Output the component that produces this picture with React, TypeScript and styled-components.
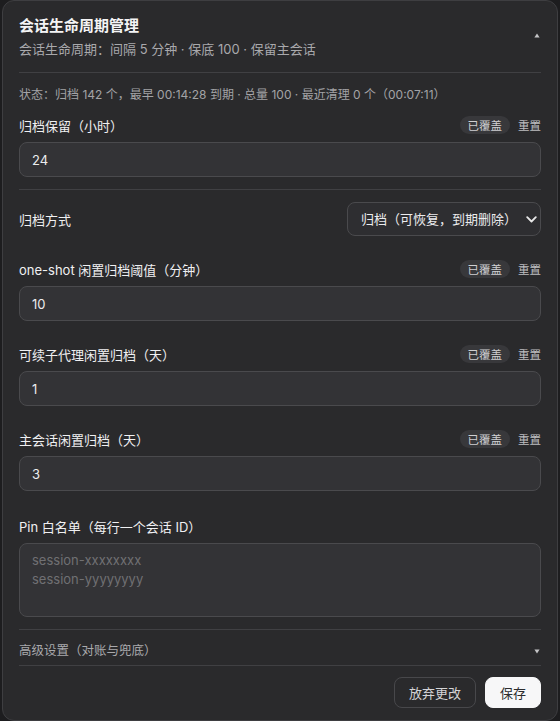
import styled, { createGlobalStyle } from 'styled-components';

const GlobalStyle = createGlobalStyle`
  * { box-sizing: border-box; }
  body {
    margin: 0;
    background: #1d1d1f;
    font-family: Inter, "Noto Sans CJK SC", sans-serif;
  }
`;

interface FieldDef {
  label: string;
  value: string;
}

const fields: FieldDef[] = [
  { label: 'one-shot 闲置归档阈值（分钟）', value: '10' },
  { label: '可续子代理闲置归档（天）', value: '1' },
  { label: '主会话闲置归档（天）', value: '3' },
];

const Caret = ({ up }: { up?: boolean }) => (
  <svg width="6" height="5" viewBox="0 0 6 5">
    <path d={up ? 'M3 0.5 L5.6 4.5 L0.4 4.5 Z' : 'M0.4 0.5 L5.6 0.5 L3 4.5 Z'} fill="#c4c4c6" />
  </svg>
);

const LabelRow = ({ label }: { label: string }) => (
  <Row>
    <Label>{label}</Label>
    <Actions>
      <Badge>已覆盖</Badge>
      <ResetLink>重置</ResetLink>
    </Actions>
  </Row>
);

const App = () => {
  return (
    <>
      <GlobalStyle />
      <Card>
        <Header>
          <div>
            <Title>会话生命周期管理</Title>
            <Subtitle>会话生命周期：间隔 5 分钟 · 保底 100 · 保留主会话</Subtitle>
          </div>
          <CaretBox>
            <Caret up />
          </CaretBox>
        </Header>

        <Status>状态：归档 142 个，最早 00:14:28 到期 · 总量 100 · 最近清理 0 个（00:07:11）</Status>

        <Field>
          <LabelRow label="归档保留（小时）" />
          <Input defaultValue="24" />
        </Field>

        <Divider />

        <SelectRow>
          <Label>归档方式</Label>
          <SelectWrap>
            <Select defaultValue="archive">
              <option value="archive">归档（可恢复，到期删除）</option>
            </Select>
            <Chevron width="11" height="7" viewBox="0 0 11 7">
              <path d="M1.2 1.2 L5.5 5.5 L9.8 1.2" fill="none" stroke="#e8e8e8" strokeWidth="1.8" strokeLinecap="round" strokeLinejoin="round" />
            </Chevron>
          </SelectWrap>
        </SelectRow>

        <FieldList>
          {fields.map((f) => (
            <Field key={f.label}>
              <LabelRow label={f.label} />
              <Input defaultValue={f.value} />
            </Field>
          ))}
          <PinField>
            <Row>
              <Label>Pin 白名单（每行一个会话 ID）</Label>
            </Row>
            <TextArea placeholder={'session-xxxxxxxx\nsession-yyyyyyyy'} />
          </PinField>
        </FieldList>

        <Advanced>
          <span>高级设置（对账与兜底）</span>
          <Caret />
        </Advanced>

        <Footer>
          <GhostButton>放弃更改</GhostButton>
          <PrimaryButton>保存</PrimaryButton>
        </Footer>
      </Card>
    </>
  );
};

const Card = styled.div`
  margin: 0 2px;
  height: 721px;
  padding: 0 16px;
  background: #2a2a2c;
  border: 1px solid #3e3e41;
  border-radius: 12px;
  color: #ececee;
`;

const Header = styled.div`
  display: flex;
  align-items: center;
  justify-content: space-between;
  padding: 15px 0 13px;
  border-bottom: 1px solid #404043;
`;

const Title = styled.div`
  font-size: 15px;
  line-height: 20px;
  font-weight: 600;
  color: #f4f4f5;
`;

const Subtitle = styled.div`
  margin-top: 3px;
  font-size: 13px;
  line-height: 20px;
  color: #a9a9ac;
`;

const CaretBox = styled.div`
  display: flex;
  padding: 0 1px 4px 0;
`;

const Status = styled.div`
  margin-top: 13px;
  font-size: 12px;
  line-height: 18px;
  color: #a3a3a6;
`;

const Field = styled.div`
  display: flex;
  flex-direction: column;
  gap: 7px;
  margin-top: 11px;
`;

const PinField = styled(Field)`
  gap: 7px;
`;

const FieldList = styled.div`
  display: flex;
  flex-direction: column;
  gap: 23px;
  margin-top: 23px;

  ${Field} {
    margin-top: 0;
  }

  ${PinField} {
    margin-top: 2px;
  }
`;

const Row = styled.div`
  display: flex;
  align-items: center;
  justify-content: space-between;
  height: 20px;
`;

const Label = styled.span`
  font-size: 13px;
  font-weight: 400;
  color: #f0f0f2;
`;

const Actions = styled.div`
  display: flex;
  align-items: center;
  gap: 8px;
`;

const Badge = styled.span`
  display: inline-flex;
  align-items: center;
  height: 18px;
  padding: 0 8px;
  border-radius: 9px;
  background: #38383b;
  font-size: 11.5px;
  color: #cfcfd2;
`;

const ResetLink = styled.span`
  font-size: 11.5px;
  color: #bdbdc0;
  cursor: pointer;
`;

const Input = styled.input`
  width: 100%;
  height: 35px;
  flex-shrink: 0;
  padding: 0 12px;
  background: #333336;
  border: 1px solid #4a4a4d;
  border-radius: 8px;
  font-family: inherit;
  font-size: 13px;
  color: #ececee;
  outline: none;
`;

const Divider = styled.div`
  height: 1px;
  margin-top: 12px;
  background: #404043;
`;

const SelectRow = styled.div`
  display: flex;
  align-items: center;
  justify-content: space-between;
  margin-top: 12px;
`;

const SelectWrap = styled.div`
  position: relative;
  width: 194px;
`;

const Select = styled.select`
  width: 100%;
  height: 34px;
  padding: 0 24px 0 13px;
  appearance: none;
  background: #2e2e31;
  border: 1px solid #4a4a4d;
  border-radius: 8px;
  font-family: inherit;
  font-size: 13px;
  color: #ececee;
  outline: none;
`;

const Chevron = styled.svg`
  position: absolute;
  right: 4px;
  top: 14px;
  pointer-events: none;
`;

const TextArea = styled.textarea`
  width: 100%;
  height: 74px;
  padding: 7px 12px;
  resize: none;
  background: #333336;
  border: 1px solid #4a4a4d;
  border-radius: 8px;
  font-family: inherit;
  font-size: 13px;
  line-height: 19px;
  color: #ececee;
  outline: none;

  &::placeholder {
    color: #707073;
  }
`;

const Advanced = styled.div`
  display: flex;
  align-items: center;
  justify-content: space-between;
  margin-top: 12px;
  padding: 12px 1px 5px 0;
  border-top: 1px solid #404043;
  border-bottom: 1px solid #404043;
  font-size: 12.5px;
  line-height: 18px;
  color: #a9a9ac;
`;

const Footer = styled.div`
  display: flex;
  justify-content: flex-end;
  gap: 9px;
  margin-top: 11px;
`;

const GhostButton = styled.button`
  height: 31px;
  padding: 0 14px;
  background: transparent;
  border: 1px solid #48484b;
  border-radius: 8px;
  font-family: inherit;
  font-size: 13px;
  color: #d4d4d7;
`;

const PrimaryButton = styled(GhostButton)`
  padding: 0 14px;
  background: #f7f7f8;
  border-color: #f7f7f8;
  color: #2c2c2e;
`;

export default App;
